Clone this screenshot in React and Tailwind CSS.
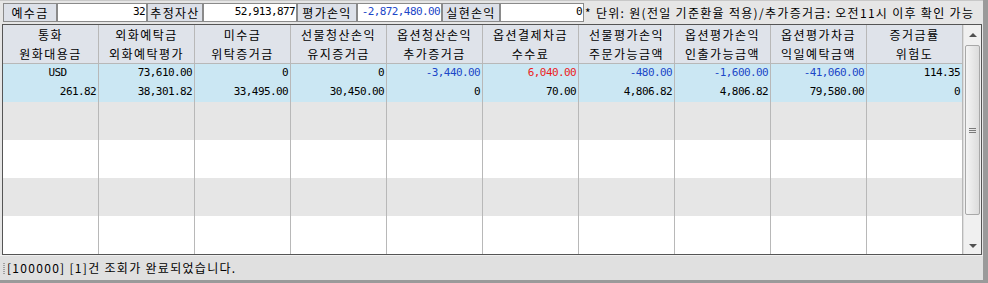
import React from "react";

const KR = { fontFamily: '"Noto Sans CJK KR", "Liberation Sans", sans-serif' };

const headers = [
  ["통화", "원화대용금"],
  ["외화예탁금", "외화예탁평가"],
  ["미수금", "위탁증거금"],
  ["선물청산손익", "유지증거금"],
  ["옵션청산손익", "추가증거금"],
  ["옵션결제차금", "수수료"],
  ["선물평가손익", "주문가능금액"],
  ["옵션평가손익", "인출가능금액"],
  ["옵션평가차금", "익일예탁금액"],
  ["증거금률", "위험도"],
];

// [line1, color1, line2]
const record = [
  ["USD", "", "261.82"],
  ["73,610.00", "", "38,301.82"],
  ["0", "", "33,495.00"],
  ["0", "", "30,450.00"],
  ["-3,440.00", "blue", "0"],
  ["6,040.00", "red", "70.00"],
  ["-480.00", "blue", "4,806.82"],
  ["-1,600.00", "blue", "4,806.82"],
  ["-41,060.00", "blue", "79,580.00"],
  ["114.35", "", "0"],
];

function Label({ children, w }) {
  return (
    <div
      className={`h-[19px] ${w} bg-[#dde1e9] border border-[#8a8a8a] flex items-center justify-center text-[12px] tracking-[1.3px] text-black`}
      style={KR}
    >
      {children}
    </div>
  );
}

function Field({ children, w, blue }) {
  return (
    <div
      className={`h-[19px] ${w} bg-white border border-[#8a8a8a] flex items-center justify-end pr-[1px] font-['DejaVu_Sans_Mono'] text-[11px] tracking-[-0.6px] ${blue ? "text-[#1c47c8]" : "text-black"}`}
    >
      {children}
    </div>
  );
}

function Num({ children, color }) {
  const c = color === "blue" ? "text-[#1c47c8]" : color === "red" ? "text-[#ec1c1c]" : "text-black";
  return (
    <div className={`h-[19px] flex items-center justify-end pr-[2px] font-['DejaVu_Sans_Mono'] text-[11px] tracking-[-0.6px] ${c}`}>
      {children}
    </div>
  );
}

function EmptyBand({ gray }) {
  return (
    <div className={`flex h-[38px] ${gray ? "bg-[#e6e6e6]" : "bg-white"}`}>
      {headers.map((_, i) => (
        <div key={i} className="w-[96px] border-r border-[#b8b8b8]" />
      ))}
    </div>
  );
}

export default function App() {
  return (
    <div className="w-[988px] h-[283px] bg-[#e6e6e6] border-r-[5px] border-b-[3px] border-[#9a9a9a] overflow-hidden flex flex-col">
      {/* 상단 요약 */}
      <div className="h-[24px] flex items-start pt-[2px] pl-[3px] border-t border-[#c8c8c8]">
        <Label w="w-[54px]">예수금</Label>
        <Field w="w-[90px]">32</Field>
        <Label w="w-[56px]">추정자산</Label>
        <Field w="w-[94px]">52,913,877</Field>
        <Label w="w-[60px]">평가손익</Label>
        <Field w="w-[85px]" blue>-2,872,480.00</Field>
        <Label w="w-[58px]">실현손익</Label>
        <Field w="w-[84px]">0</Field>
        <div className="h-[19px] flex items-center pl-[1px] text-[12px] tracking-[1.3px] whitespace-nowrap text-black" style={KR}>
          * 단위: 원(전일 기준환율 적용)/추가증거금: 오전11시 이후 확인 가능
        </div>
      </div>

      {/* 그리드 */}
      <div className="ml-[2px] w-[980px] h-[231px] border border-[#555555] bg-white flex">
        <div className="w-[960px] flex flex-col">
          <div className="flex h-[39px] bg-[#dfe3ea] border-b border-[#b8b8b8]">
            {headers.map(([a, b], i) => (
              <div key={i} className="w-[96px] border-r border-[#b8b8b8] flex flex-col text-[12px] tracking-[1.5px] text-black" style={KR}>
                <div className="h-[19px] flex items-center justify-center">{a}</div>
                <div className="h-[19px] flex items-center justify-center">{b}</div>
              </div>
            ))}
          </div>
          <div className="flex h-[38px] bg-[#cbe7f3]">
            {record.map(([a, c, b], i) => (
              <div key={i} className="w-[96px] border-r border-[#b8b8b8] flex flex-col">
                {i === 0 ? (
                  <div className="h-[19px] flex items-center justify-center pl-[14px] font-['DejaVu_Sans_Mono'] text-[11px] tracking-[-0.6px] text-black">
                    {a}
                  </div>
                ) : (
                  <Num color={c}>{a}</Num>
                )}
                <Num>{b}</Num>
              </div>
            ))}
          </div>
          <EmptyBand gray />
          <EmptyBand />
          <EmptyBand gray />
          <EmptyBand />
        </div>

        {/* 스크롤바 */}
        <div className="w-[18px] bg-[#f0f0f0] border-l border-[#dcdcdc] flex flex-col">
          <div className="h-[20px] flex items-center justify-center">
            <div className="w-0 h-0 border-l-[4px] border-r-[4px] border-b-[4px] border-l-transparent border-r-transparent border-b-[#505050]" />
          </div>
          <div className="mx-[1px] h-[170px] bg-gradient-to-r from-[#f4f4f4] to-[#dcdcdc] border border-[#a8a8a8] rounded-[2px] flex items-center justify-center">
            <div className="flex flex-col gap-[1px]">
              <div className="w-[7px] h-px bg-[#7a7a7a]" />
              <div className="w-[7px] h-px bg-[#7a7a7a]" />
              <div className="w-[7px] h-px bg-[#7a7a7a]" />
            </div>
          </div>
          <div className="flex-1 flex items-end justify-center pb-[6px]">
            <div className="w-0 h-0 border-l-[4px] border-r-[4px] border-t-[4px] border-l-transparent border-r-transparent border-t-[#505050]" />
          </div>
        </div>
      </div>

      {/* 상태바 */}
      <div className="flex-1 flex items-center pl-[3px] bg-[#e0e0e0] border-t border-[#f0f0f0]">
        <div className="flex flex-col gap-[1px] mr-[2px]">
          {[0, 1, 2, 3, 4, 5].map((i) => (
            <div key={i} className="w-[2px] h-[1px] bg-[#a0a0a0]" />
          ))}
        </div>
        <span className="text-[12px] tracking-[1.3px] text-black" style={KR}>
          [100000] [1]건 조회가 완료되었습니다.
        </span>
      </div>
    </div>
  );
}
